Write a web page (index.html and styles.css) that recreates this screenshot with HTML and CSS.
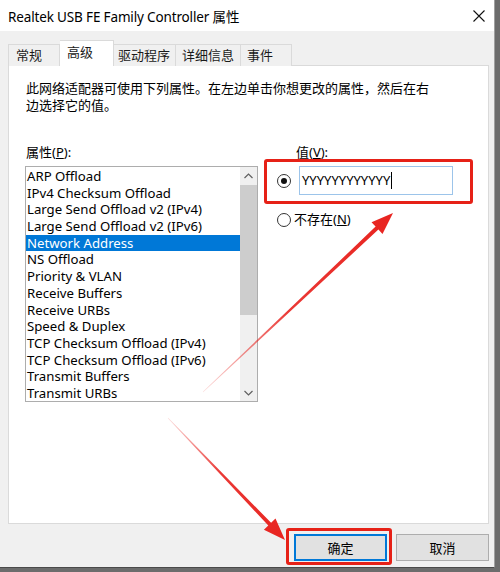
FILE: index.html
```html
<!DOCTYPE html>
<html lang="zh-CN">
<head>
    <meta charset="UTF-8">
    <title>Realtek USB FE Family Controller 属性</title>
    <link rel="stylesheet" href="styles.css">
</head>
<body>
    <div class="window">
        <div class="titlebar">
            <span class="title">Realtek USB FE Family Controller 属性</span>
            <svg class="close" width="12" height="12" viewBox="0 0 12 12">
                <path d="M0.5 0.5 L11.5 11.5 M11.5 0.5 L0.5 11.5" stroke="#111" stroke-width="1.1" fill="none"/>
            </svg>
        </div>

        <div class="tabs">
            <div class="tab tab-general">常规</div>
            <div class="tab tab-advanced active">高级</div>
            <div class="tab tab-driver">驱动程序</div>
            <div class="tab tab-details">详细信息</div>
            <div class="tab tab-events">事件</div>
        </div>

        <div class="panel">
            <p class="desc">此网络适配器可使用下列属性。在左边单击你想更改的属性，然后在右<br>边选择它的值。</p>

            <div class="columns">
                <div class="props">
                    <div class="label">属性(<u>P</u>):</div>
                    <div class="listbox">
                        <div class="items">
                            <div class="item">ARP Offload</div>
                            <div class="item">IPv4 Checksum Offload</div>
                            <div class="item">Large Send Offload v2 (IPv4)</div>
                            <div class="item">Large Send Offload v2 (IPv6)</div>
                            <div class="item selected">Network Address</div>
                            <div class="item">NS Offload</div>
                            <div class="item">Priority &amp; VLAN</div>
                            <div class="item">Receive Buffers</div>
                            <div class="item">Receive URBs</div>
                            <div class="item">Speed &amp; Duplex</div>
                            <div class="item">TCP Checksum Offload (IPv4)</div>
                            <div class="item">TCP Checksum Offload (IPv6)</div>
                            <div class="item">Transmit Buffers</div>
                            <div class="item">Transmit URBs</div>
                        </div>
                        <div class="scrollbar">
                            <div class="sb-arrow">
                                <svg width="9" height="6" viewBox="0 0 9 6"><path d="M0.5 5 L4.5 1 L8.5 5" stroke="#606060" stroke-width="1.2" fill="none"/></svg>
                            </div>
                            <div class="sb-track">
                                <div class="sb-thumb"></div>
                            </div>
                            <div class="sb-arrow">
                                <svg width="9" height="6" viewBox="0 0 9 6"><path d="M0.5 1 L4.5 5 L8.5 1" stroke="#606060" stroke-width="1.2" fill="none"/></svg>
                            </div>
                        </div>
                    </div>
                </div>

                <div class="value">
                    <div class="label value-label">值(<u>V</u>):</div>
                    <div class="value-row">
                        <span class="radio checked"></span>
                        <div class="textbox">YYYYYYYYYYYY<span class="caret"></span></div>
                    </div>
                    <div class="none-row">
                        <span class="radio"></span>
                        <span>不存在(<u>N</u>)</span>
                    </div>
                </div>
            </div>
        </div>

        <div class="buttons">
            <button class="btn btn-default">确定</button>
            <button class="btn">取消</button>
        </div>

        <!-- annotation overlay: red boxes and arrows -->
        <svg class="marks" width="494" height="568" viewBox="0 0 494 568">
            <defs>
                <linearGradient id="fade1" x1="203" y1="392" x2="393" y2="213" gradientUnits="userSpaceOnUse">
                    <stop offset="0" stop-color="#e8231f" stop-opacity="0.15"/>
                    <stop offset="0.45" stop-color="#e8231f" stop-opacity="0.9"/>
                    <stop offset="1" stop-color="#e8231f"/>
                </linearGradient>
                <linearGradient id="fade2" x1="168" y1="418" x2="285" y2="540" gradientUnits="userSpaceOnUse">
                    <stop offset="0" stop-color="#e8231f" stop-opacity="0.15"/>
                    <stop offset="0.45" stop-color="#e8231f" stop-opacity="0.9"/>
                    <stop offset="1" stop-color="#e8231f"/>
                </linearGradient>
            </defs>
            <rect x="265.5" y="160.5" width="206" height="42" rx="1.5" fill="none" stroke="#e62117" stroke-width="3"/>
            <rect x="287.5" y="529.5" width="103" height="34" rx="1.5" fill="none" stroke="#e62117" stroke-width="3"/>
            <polygon fill="url(#fade1)" points="203.2,392.2 378.4,229.6 382.5,233.9 393,213 371.5,222.3 375.6,226.6 202.8,391.8"/>
            <polygon fill="url(#fade2)" points="167.8,418.2 268.3,525.6 263.9,529.8 285,540 275.5,518.6 271.1,522.8 168.2,417.8"/>
        </svg>
    </div>
</body>
</html>
```

FILE: styles.css
```css
* {
    box-sizing: border-box;
}

body {
    margin: 0;
    width: 500px;
    height: 572px;
    overflow: hidden;
    background: #6c6c6c;
    font-family: "Noto Sans", "Noto Sans CJK SC", sans-serif;
    color: #000;
}

.window {
    position: relative;
    width: 495px;
    height: 568px;
    background: #f0f0f0;
    border-right: 1px solid #a0a0a0;
    border-bottom: 1px solid #4a4a4a;
}

.titlebar {
    height: 31px;
    background: #fff;
    display: flex;
    align-items: center;
    justify-content: space-between;
    padding: 0 9px 0 8px;
}

.title {
    font-size: 13.5px;
    letter-spacing: -0.15px;
}

.close {
    display: block;
}

/* tabs */
.tabs {
    height: 35px;
    display: flex;
    align-items: flex-end;
    padding-left: 8px;
}

.tab {
    height: 22px;
    line-height: 21px;
    font-size: 13px;
    background: #f0f0f0;
    border: 1px solid #dadada;
    border-bottom: none;
    border-left: none;
    padding-left: 7px;
    color: #1a1a1a;
}

.tab-general {
    width: 52px;
    border-left: 1px solid #dadada;
}

.tab-advanced { width: 54px; }
.tab-driver { width: 62px; padding-left: 4px; }
.tab-details { width: 65px; padding-left: 6px; }
.tab-events { width: 51px; padding-left: 6px; }

.tab.active {
    height: 26px;
    line-height: 23px;
    background: #fff;
    border-top: 1px solid #dadada;
    position: relative;
    z-index: 1;
}

/* panel */
.panel {
    width: 481px;
    height: 459px;
    margin-left: 8px;
    margin-top: -1px;
    background: #fff;
    border: 1px solid #dadada;
    padding: 14px 0 0 16px;
}

.desc {
    margin: 0 0 0 1px;
    font-size: 13px;
    line-height: 17px;
}

.columns {
    display: flex;
    margin-top: 30px;
}

.label {
    font-size: 13px;
    line-height: 17px;
    margin-left: 1px;
}

.listbox {
    margin-top: 5px;
    width: 233px;
    height: 236px;
    border: 1px solid #adadad;
    display: flex;
}

.items {
    flex: 1;
    padding-top: 1px;
}

.item {
    height: 16.7px;
    line-height: 16.7px;
    font-size: 13.2px;
    padding-left: 1px;
    white-space: nowrap;
}

.item.selected {
    background: #0078d7;
    color: #fff;
}

.scrollbar {
    width: 17px;
    background: #f0f0f0;
    display: flex;
    flex-direction: column;
}

.sb-arrow {
    height: 17px;
    display: flex;
    align-items: center;
    justify-content: center;
}

.sb-track {
    flex: 1;
    padding: 1px 0;
}

.sb-thumb {
    width: 17px;
    height: 130px;
    margin: 0 auto;
    background: #cdcdcd;
}

/* value side */
.value {
    margin-left: 19px;
}

.value-label {
    padding-left: 18px;
}

.value-row {
    margin-top: 5px;
    height: 29px;
    display: flex;
    align-items: center;
    gap: 8px;
}

.radio {
    width: 14px;
    height: 14px;
    border: 1px solid #333;
    border-radius: 50%;
    background: #fff;
    position: relative;
    flex-shrink: 0;
}

.radio.checked::after {
    content: "";
    position: absolute;
    left: 3px;
    top: 3px;
    width: 6px;
    height: 6px;
    border-radius: 50%;
    background: #111;
}

.textbox {
    width: 154px;
    height: 29px;
    border: 1px solid #9cc4ea;
    padding-left: 2px;
    font-size: 13px;
    line-height: 27px;
    display: flex;
    align-items: center;
}

.caret {
    display: inline-block;
    width: 1px;
    height: 17px;
    background: #000;
    margin-left: 1px;
}

.none-row {
    margin-top: 16px;
    display: flex;
    align-items: center;
    gap: 3px;
    font-size: 13px;
    line-height: 17px;
}

/* buttons */
.buttons {
    display: flex;
    justify-content: flex-end;
    gap: 9px;
    padding: 10px 5px 0 0;
}

.btn {
    width: 93px;
    height: 27px;
    background: #e1e1e1;
    border: 1px solid #adadad;
    font-family: "Noto Sans", "Noto Sans CJK SC", sans-serif;
    font-size: 13px;
    color: #000;
    padding: 0;
}

.btn-default {
    border: 2px solid #0078d7;
}

.marks {
    position: absolute;
    left: 0;
    top: 0;
    pointer-events: none;
}
```
